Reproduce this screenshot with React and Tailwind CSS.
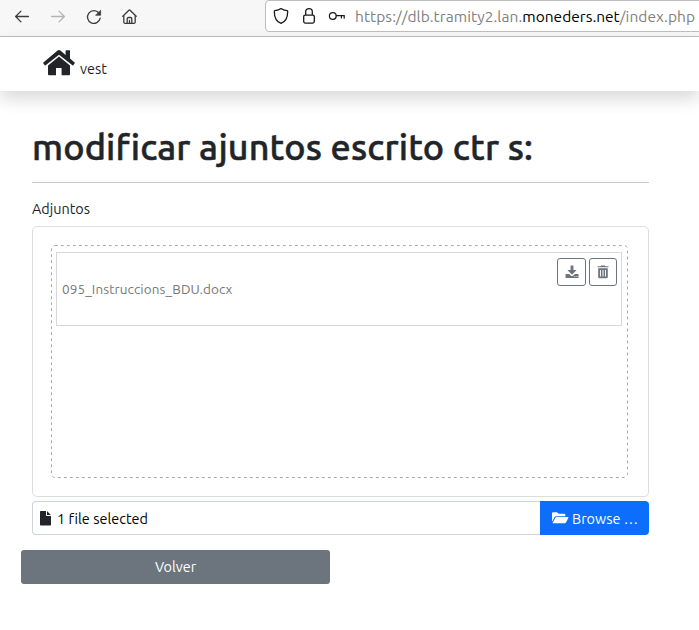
import React from "react";

function BackIcon() {
  return (
    <svg width="16" height="16" viewBox="0 0 16 16" fill="none" stroke="#3c3c40" strokeWidth="1.3" strokeLinecap="round" strokeLinejoin="round">
      <path d="M14.4 7.5H1.6M7 2.1L1.6 7.5L7 12.9" />
    </svg>
  );
}

function ForwardIcon() {
  return (
    <svg width="16" height="16" viewBox="0 0 16 16" fill="none" stroke="#b4b4b5" strokeWidth="1.3" strokeLinecap="round" strokeLinejoin="round">
      <path d="M1.6 7.5H14.4M9 2.1L14.4 7.5L9 12.9" />
    </svg>
  );
}

function ReloadIcon() {
  return (
    <svg width="16" height="16" viewBox="0 0 16 16" fill="none" stroke="#3c3c40" strokeWidth="1.3" strokeLinecap="round">
      <path d="M14.2 9.2A6.4 6.4 0 1 1 12.9 4" />
      <path d="M14.6 1.6V6.2H10Z" fill="#3c3c40" strokeWidth="0.8" strokeLinejoin="round" />
    </svg>
  );
}

function HomeOutlineIcon() {
  return (
    <svg width="16" height="16" viewBox="0 0 16 16" fill="none" stroke="#3c3c40" strokeWidth="1.3" strokeLinecap="round" strokeLinejoin="round">
      <path d="M0.8 7.2L6.9 1.2Q7.5 0.6 8.1 1.2L14.2 7.2" />
      <path d="M1.8 6.8V13Q1.8 14.4 3.1 14.4H11.9Q13.2 14.4 13.2 13V6.8" />
      <path d="M5.2 14V10Q5.2 8.5 6.5 8.5H8.5Q9.8 8.5 9.8 10V14M7.5 11.5V14" />
    </svg>
  );
}

function ShieldIcon() {
  return (
    <svg width="16" height="18" viewBox="0 0 16 18" fill="none" stroke="#18181a" strokeWidth="1.3" strokeLinejoin="round">
      <path d="M8 1.6C6.3 2.9 3.8 3.4 1.9 3.6Q1.3 3.7 1.3 4.4C1.3 9.5 2.8 14.3 8 16.4C13.2 14.3 14.7 9.5 14.7 4.4Q14.7 3.7 14.1 3.6C12.2 3.4 9.7 2.9 8 1.6Z" />
    </svg>
  );
}

function LockIcon() {
  return (
    <svg width="14" height="18" viewBox="0 0 14 18" fill="none" stroke="#18181a" strokeWidth="1.3">
      <rect x="1.7" y="8.1" width="10.6" height="8" rx="1.5" />
      <path d="M3.7 8V4.6C3.7 0.6 10.3 0.6 10.3 4.6V8" />
    </svg>
  );
}

function KeyIcon() {
  return (
    <svg width="18" height="10" viewBox="0 0 18 10" fill="none" stroke="#18181a" strokeWidth="1.2" strokeLinecap="round">
      <circle cx="4.8" cy="5" r="3.4" />
      <path d="M8.3 4.6H16.2V7.2M13.4 4.8V7" />
    </svg>
  );
}

function HouseIcon() {
  return (
    <svg width="32" height="26" viewBox="0 0 32 26" fill="#212529">
      <path d="M16 6.4L5 15.5V24.2Q5 25.2 6 25.2H13V18H18.6V25.2H26Q27 25.2 27 24.2V15.5Z" />
      <path d="M14.6 0.6Q16 -0.4 17.4 0.6L22.6 5V0.8Q22.6 0.3 23.2 0.3H26.5Q27 0.3 27 0.8V8.6L31.6 12.4Q32.1 12.8 31.7 13.3L30.3 15.2Q29.9 15.7 29.4 15.3L16 4.7L2.6 15.3Q2.1 15.7 1.7 15.2L0.3 13.3Q-0.1 12.8 0.4 12.4Z" />
    </svg>
  );
}

function DownloadIcon() {
  return (
    <svg width="14" height="14" viewBox="0 0 14 14" fill="#6c757d">
      <path d="M5.6 0.5H8.4V5H11.6L7 9.7L2.4 5H5.6Z" />
      <path fillRule="evenodd" d="M1 9H4.2L6 10.8Q7 11.7 8 10.8L9.8 9H13Q13.5 9 13.5 9.6V12.5Q13.5 13.1 13 13.1H1Q0.5 13.1 0.5 12.5V9.6Q0.5 9 1 9ZM9.3 11.2V12.1H10.3V11.2ZM11.4 11.2V12.1H12.4V11.2Z" />
    </svg>
  );
}

function TrashIcon() {
  return (
    <svg width="12" height="14" viewBox="0 0 12 14" fill="#6c757d">
      <path d="M4 0.5H8L8.5 1.2H11.5V2.3H0.5V1.2H3.5Z" />
      <path fillRule="evenodd" d="M1.2 3.2H10.8V12Q10.8 13.3 9.6 13.3H2.4Q1.2 13.3 1.2 12ZM3 5V11.6H3.9V5ZM5.5 5V11.6H6.5V5ZM8.1 5V11.6H9V5Z" />
    </svg>
  );
}

function FileIcon() {
  return (
    <svg width="11" height="15" viewBox="0 0 11 15" fill="#212529">
      <path d="M0.7 0H6V4.3Q6 5 6.7 5H11V13.8Q11 14.5 10.3 14.5H0.7Q0 14.5 0 13.8V0.7Q0 0 0.7 0Z" />
      <path d="M7 0.1L10.9 4H7Z" />
    </svg>
  );
}

function FolderIcon() {
  return (
    <svg width="17" height="12" viewBox="0 0 17 12" fill="#fff">
      <path d="M0 9.8V1.3Q0 0.2 1.1 0.2H5L6.7 1.8H12.3Q13.4 1.8 13.4 2.9V4.2H4.4Q3 4.2 2.3 5.4Z" />
      <path d="M0.5 11.2L3.2 6Q3.7 5.1 4.7 5.1H15.8Q16.8 5.1 16.3 6L14.1 10.2Q13.5 11.3 12.4 11.3H0.6Z" />
    </svg>
  );
}

function DashedOutline() {
  return (
    <svg className="absolute -left-px -top-px" width="577" height="233" fill="none" stroke="#a6a6a6" strokeDasharray="2.7 3.3">
      <rect x="0.5" y="0.5" width="576" height="232" rx="3.5" />
    </svg>
  );
}

export default function App() {
  return (
    <div className="h-[630px] w-[699px] overflow-hidden bg-white font-['Ubuntu','Noto_Sans',sans-serif] text-[#212529]">
      <div className="flex h-[37px] items-start border-b border-[#bdbdbd] bg-[#f7f7f7]">
        <div className="flex w-[265px] shrink-0 gap-5 pl-3.5 pt-[9px]">
          <BackIcon />
          <ForwardIcon />
          <ReloadIcon />
          <HomeOutlineIcon />
        </div>
        <div className="flex h-8 w-[460px] shrink-0 items-center rounded-[4px] border border-[#bdbdbd] bg-white pl-[7px]">
          <ShieldIcon />
          <span className="ml-[13px] flex"><LockIcon /></span>
          <span className="ml-3 flex"><KeyIcon /></span>
          <span className="ml-[9px] mt-px whitespace-nowrap text-[15.5px] leading-5 text-[#808080]">
            <span className="tracking-[0.06px]">https://dlb.tramity2.lan.</span>
            <span className="text-black">moneders.net</span>
            <span className="tracking-[0.08px]">/index.php</span>
          </span>
        </div>
      </div>
      <nav className="flex h-[54px] items-start pl-[43px] pt-[13px] shadow-[0_8px_16px_rgba(0,0,0,0.15)]">
        <HouseIcon />
        <span className="ml-[5px] mt-[9px] text-[14.4px] leading-5">vest</span>
      </nav>
      <main>
        <div className="w-[649px] pl-8">
          <h1 className="h-[91px] whitespace-nowrap pt-[34px] text-[36px] font-medium leading-[44px] tracking-[0.13px] [-webkit-text-stroke:0.5px_#212529]">modificar ajuntos escrito ctr s:</h1>
          <hr className="border-t border-[#c8c9ca]" />
          <div className="mt-4 text-[14.4px] leading-5">Adjuntos</div>
          <div className="mt-[7px] h-[271px] rounded-[5px] border border-[#dddddd] p-[18px]">
            <div className="relative mr-0.5 h-[233px] border border-transparent px-1 pt-1.5">
              <DashedOutline />
              <div className="relative flex h-[74px] w-[566px] items-center border border-[#d8d8d8] pl-[5px]">
                <span className="text-[13.5px] leading-5 tracking-[0.1px] text-[#777777]">095_Instruccions_BDU.docx</span>
                <div className="absolute right-1 top-[5px] flex gap-[3px]">
                  <button className="flex h-7 w-[29px] items-center justify-center rounded-[3px] border border-[#6c757d]"><DownloadIcon /></button>
                  <button className="flex h-7 w-7 items-center justify-center rounded-[3px] border border-[#6c757d]"><TrashIcon /></button>
                </div>
              </div>
            </div>
          </div>
          <div className="mt-1 flex h-[34px]">
            <div className="flex flex-1 items-center rounded-l-[4px] border border-r-0 border-[#ced4da] pl-[7px]">
              <FileIcon />
              <span className="ml-1.5 mt-0.5 text-[14.4px] leading-5 tracking-[0.03px] text-black">1 file selected</span>
            </div>
            <button className="flex w-[109px] items-center rounded-r-[4px] bg-[#0d6efd] pl-3 text-white">
              <FolderIcon />
              <span className="ml-[3px] mt-0.5 whitespace-nowrap text-[14.4px] leading-5">Browse …</span>
            </button>
          </div>
        </div>
        <button className="ml-[21px] mt-[15px] block h-[34px] w-[309px] rounded-[3px] bg-[#6c757d] text-[14.4px] leading-5 text-white">Volver</button>
      </main>
    </div>
  );
}
